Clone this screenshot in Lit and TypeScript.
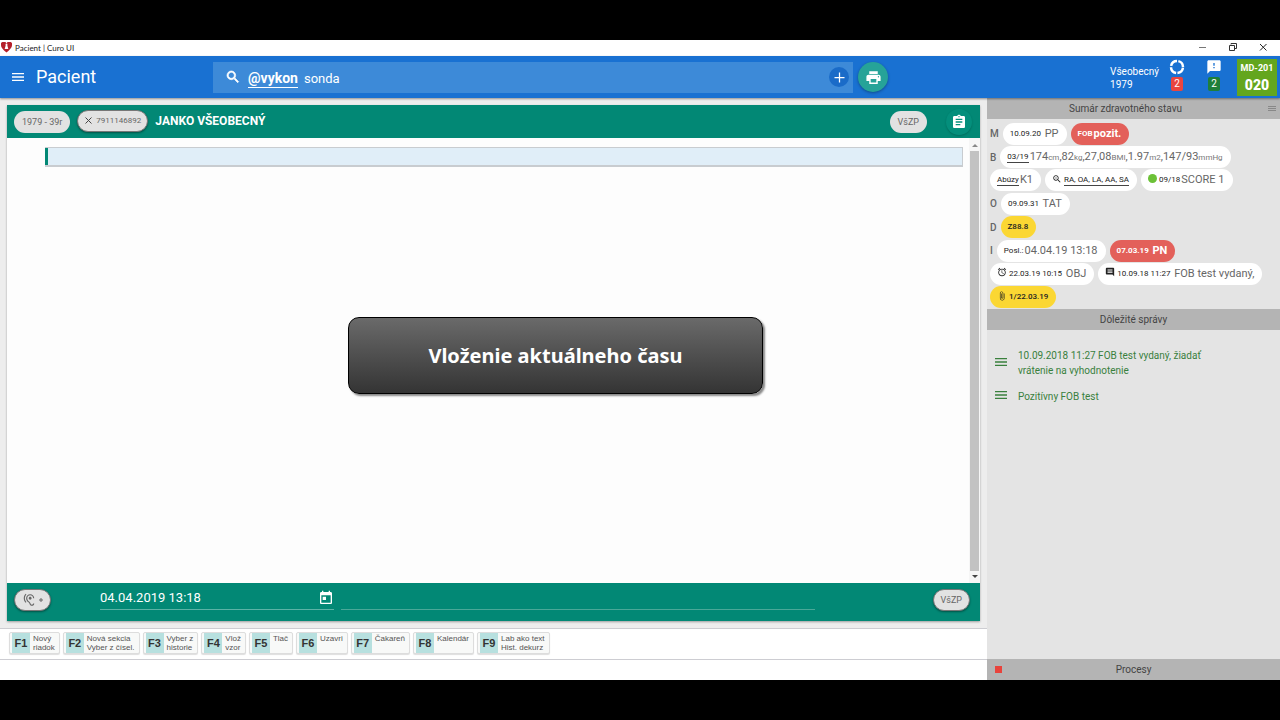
import { LitElement, html, css, svg } from "lit";
import { customElement } from "lit/decorators.js";

const ICONS: Record<string, string> = {
  menu: "M3 18h18v-2H3v2zm0-5h18v-2H3v2zm0-7v2h18V6H3z",
  search:
    "M15.5 14h-.79l-.28-.27C15.41 12.59 16 11.11 16 9.5 16 5.91 13.09 3 9.5 3S3 5.91 3 9.5 5.91 16 9.5 16c1.61 0 3.09-.59 4.23-1.57l.27.28v.79l5 4.99L20.49 19l-4.99-5zm-6 0C7.01 14 5 11.99 5 9.5S7.01 5 9.5 5 14 7.01 14 9.5 11.99 14 9.5 14z",
  zoom:
    "M15.5 14h-.79l-.28-.27C15.41 12.59 16 11.11 16 9.5 16 5.91 13.09 3 9.5 3S3 5.91 3 9.5 5.91 16 9.5 16c1.61 0 3.09-.59 4.23-1.57l.27.28v.79l5 4.99L20.49 19l-4.99-5zm-6 0C7.01 14 5 11.99 5 9.5S7.01 5 9.5 5 14 7.01 14 9.5 11.99 14 9.5 14zM7 9h5v1H7z",
  plus: "M20 13h-7v7h-2v-7H4v-2h7V4h2v7h7v2z",
  print:
    "M19 8H5c-1.66 0-3 1.34-3 3v6h4v4h12v-4h4v-6c0-1.66-1.34-3-3-3zm-3 11H8v-5h8v5zm3-7c-.55 0-1-.45-1-1s.45-1 1-1 1 .45 1 1-.45 1-1 1zm-1-9H6v4h12V3z",
  assignment:
    "M19 3h-4.18C14.4 1.84 13.3 1 12 1c-1.3 0-2.4.84-2.82 2H5c-1.1 0-2 .9-2 2v14c0 1.1.9 2 2 2h14c1.1 0 2-.9 2-2V5c0-1.1-.9-2-2-2zm-7 0c.55 0 1 .45 1 1s-.45 1-1 1-1-.45-1-1 .45-1 1-1zm2 14H7v-2h7v2zm3-4H7v-2h10v2zm0-4H7V7h10v2z",
  feedback:
    "M20 2H4c-1.1 0-1.99.9-1.99 2L2 22l4-4h14c1.1 0 2-.9 2-2V4c0-1.1-.9-2-2-2zm-7 12h-2v-2h2v2zm0-4h-2V6h2v4z",
  comment:
    "M21.99 4c0-1.1-.89-2-1.99-2H4c-1.1 0-2 .9-2 2v12c0 1.1.9 2 2 2h14l4 4-.01-18zM18 14H6v-2h12v2zm0-3H6V9h12v2zm0-3H6V6h12v2z",
  alarm:
    "M22 5.72l-4.6-3.86-1.29 1.53 4.6 3.86L22 5.72zM7.88 3.39L6.6 1.86 2 5.71l1.29 1.53 4.59-3.85zM12.5 8H11v6l4.75 2.85.75-1.23-4-2.37V8zM12 4c-4.97 0-9 4.03-9 9s4.02 9 9 9c4.97 0 9-4.03 9-9s-4.03-9-9-9zm0 16c-3.87 0-7-3.13-7-7s3.13-7 7-7 7 3.13 7 7-3.13 7-7 7z",
  attach:
    "M16.5 6v11.5c0 2.21-1.79 4-4 4s-4-1.79-4-4V5c0-1.38 1.12-2.5 2.5-2.5s2.5 1.12 2.5 2.5v10.5c0 .55-.45 1-1 1s-1-.45-1-1V6H10v9.5c0 1.38 1.12 2.5 2.5 2.5s2.5-1.12 2.5-2.5V5c0-2.21-1.79-4-4-4S7 2.79 7 5v12.5c0 3.04 2.46 5.5 5.5 5.5s5.5-2.46 5.5-5.5V6h-1.5z",
  today:
    "M19 3h-1V1h-2v2H8V1H6v2H5c-1.11 0-1.99.9-1.99 2L3 19c0 1.1.89 2 2 2h14c1.1 0 2-.9 2-2V5c0-1.1-.9-2-2-2zm0 16H5V8h14v11zM7 10h5v5H7v-5z",
  hearing:
    "M17 20c-.29 0-.56-.06-.76-.15-.71-.37-1.21-.88-1.71-2.38-.51-1.56-1.47-2.29-2.39-3-.79-.61-1.61-1.24-2.32-2.53C9.29 10.98 9 9.93 9 9c0-2.8 2.2-5 5-5s5 2.2 5 5h2c0-3.93-3.07-7-7-7S7 5.07 7 9c0 1.26.38 2.65 1.07 3.9.91 1.65 1.98 2.48 2.85 3.15.81.62 1.39 1.07 1.71 2.05.6 1.82 1.37 2.84 2.73 3.55.51.23 1.07.35 1.64.35 2.21 0 4-1.79 4-4h-2c0 1.1-.9 2-2 2zM7.64 2.64L6.22 1.22C4.23 3.21 3 5.96 3 9s1.23 5.79 3.22 7.78l1.41-1.41C6.01 13.74 5 11.49 5 9s1.01-4.74 2.64-6.36zM11.5 9c0 1.38 1.12 2.5 2.5 2.5s2.5-1.12 2.5-2.5-1.12-2.5-2.5-2.5-2.5 1.12-2.5 2.5z",
};

const icon = (name: string, size: number) => svg`
  <svg width=${size} height=${size} viewBox="0 0 24 24" fill="currentColor" aria-hidden="true">
    <path d=${ICONS[name]}></path>
  </svg>`;

const KEYS: [string, string[]][] = [
  ["F1", ["Nový", "riadok"]],
  ["F2", ["Nová sekcia", "Vyber z čísel."]],
  ["F3", ["Vyber z", "historie"]],
  ["F4", ["Vlož", "vzor"]],
  ["F5", ["Tlač"]],
  ["F6", ["Uzavri"]],
  ["F7", ["Čakareň"]],
  ["F8", ["Kalendár"]],
  ["F9", ["Lab ako text", "Hist. dekurz"]],
];

@customElement("app-root")
export class AppRoot extends LitElement {
  static styles = css`
    :host {
      display: flex;
      flex-direction: column;
      box-sizing: border-box;
      height: 100vh;
      padding: 40px 0;
      background: #000;
      position: relative;
      font-family: Roboto, sans-serif;
      color: #555;
    }
    * {
      box-sizing: border-box;
    }
    svg {
      display: block;
      flex: none;
    }
    button,
    input {
      font: inherit;
      color: inherit;
      border: 0;
      padding: 0;
      margin: 0;
      background: none;
      outline: none;
      min-width: 0;
    }
    a {
      color: inherit;
    }

    .titlebar {
      display: flex;
      align-items: center;
      height: 16px;
      flex: none;
      background: #fff;
      font: 8px/14px Lato, sans-serif;
      color: #222;
      padding: 0 0 1px 1px;
    }
    .titlebar > svg {
      margin-right: 3px;
    }
    .window-buttons {
      margin-left: auto;
      display: flex;
      gap: 20px;
      padding: 0 12px 1px 0;
    }
    .window-buttons button {
      display: block;
    }

    .topbar {
      display: flex;
      align-items: center;
      height: 42px;
      flex: none;
      background: #1971d2;
      color: #fff;
      box-shadow: 0 1px 2px #0006;
      z-index: 1;
    }
    .brand {
      display: flex;
      align-items: center;
      gap: 10px;
      width: 213px;
      padding-left: 10px;
    }
    .brand h1 {
      margin: 0;
      font-size: 18px;
      line-height: 24px;
      font-weight: 400;
    }
    .search {
      display: flex;
      align-items: center;
      width: 50%;
      height: 31px;
      background: #3d8ad8;
      padding: 0 4px 0 12px;
      font-size: 13px;
      line-height: 17px;
    }
    .search > svg {
      stroke: currentColor;
    }
    .search b {
      margin: 3px 6px 0 7px;
      border-bottom: 1px solid #fff;
      font-size: 14px;
    }
    .search input {
      flex: 1;
      margin-top: 2px;
    }
    .add {
      display: grid;
      place-items: center;
      width: 20px;
      height: 20px;
      border-radius: 50%;
      background: #1a6bc8;
    }
    .print {
      display: grid;
      place-items: center;
      width: 30px;
      height: 30px;
      margin-left: 5px;
      border-radius: 50%;
      background: #26a398;
      box-shadow: 0 1px 3px #0005;
    }
    .user {
      margin-left: auto;
      font-size: 10px;
      line-height: 13px;
      padding-top: 1px;
    }
    .counter {
      display: flex;
      flex-direction: column;
      align-items: center;
      gap: 2px;
      width: 36px;
      padding-bottom: 4px;
    }
    .counter + .counter {
      width: 38px;
    }
    .counter span {
      width: 12px;
      border-radius: 2px;
      background: #e94540;
      font-size: 10px;
      line-height: 14px;
      text-align: center;
    }
    .counter .green {
      background: #1f7f3a;
    }
    .room {
      display: flex;
      flex-direction: column;
      align-items: center;
      justify-content: center;
      width: 40px;
      height: 37px;
      margin: 0 3px 0 4px;
      background: #63a61e;
      font-weight: 700;
      font-size: 9px;
      line-height: 16px;
    }
    .room strong {
      font-size: 14px;
      line-height: 18px;
    }

    .main {
      display: flex;
      flex: 1;
      min-height: 0;
    }
    .left {
      flex: 1;
      min-width: 0;
      display: flex;
      flex-direction: column;
      background: #ededed;
    }
    .card {
      flex: 1;
      min-height: 0;
      display: flex;
      flex-direction: column;
      margin: 7px 7px;
      background: #fdfdfd;
      box-shadow: 0 1px 2px #0005;
    }
    .patient {
      display: flex;
      align-items: center;
      height: 33px;
      flex: none;
      padding: 0 8px 0 7px;
      background: #028875;
      color: #fff;
    }
    .patient h2 {
      margin: 0 auto 2px 7px;
      font-size: 12px;
      line-height: 16px;
      font-weight: 700;
    }
    .tag {
      display: flex;
      align-items: center;
      gap: 3px;
      height: 22px;
      padding: 0 8px;
      border-radius: 11px;
      background: #e2e2e2;
      color: #666;
      font-size: 9px;
      line-height: 12px;
    }
    .tag.ring {
      border: 1px solid #777;
      padding: 0 7px;
      box-shadow: 0 1px 2px #0006;
    }
    .patient .ring {
      margin: 0 0 2px 7px;
      padding: 0 6px;
      font-size: 8px;
    }
    .clip {
      display: grid;
      place-items: center;
      width: 26px;
      height: 26px;
      margin-left: 19px;
      border-radius: 50%;
      background: #048f7c;
      box-shadow: 0 1px 2px #0003;
    }
    .editor {
      flex: 1;
      min-height: 0;
      display: flex;
      padding-left: 38px;
    }
    .line {
      flex: 1;
      height: 20px;
      margin: 9px 6px 0 0;
      padding: 0 6px;
      background: #e0eef8;
      border: solid #c8ccd0;
      border-width: 1px 1px 2px 0;
      box-shadow: inset 3px 0 0 #028875;
      font-size: 12px;
    }
    .scroll {
      display: flex;
      flex-direction: column;
      align-items: center;
      width: 11px;
      padding: 6px 1px 5px;
      gap: 4px;
      background: #f6f6f6;
      color: #666;
    }
    .thumb {
      flex: 1;
      width: 9px;
      background: #c2c2c2;
    }
    .entry {
      display: flex;
      align-items: center;
      height: 38px;
      flex: none;
      padding: 0 10px 4px 7px;
      background: #028875;
      color: #fff;
    }
    .date {
      display: flex;
      align-items: flex-start;
      width: 234px;
      height: 20px;
      margin-left: 49px;
      border-bottom: 1px solid #5bb3a6;
      font-size: 13px;
      line-height: 16px;
    }
    .date input {
      flex: 1;
    }
    .note {
      flex: 1;
      height: 20px;
      margin: 0 118px 0 7px;
      border-bottom: 1px solid #4aa898;
      font-size: 13px;
    }
    .keys {
      display: flex;
      gap: 3px;
      height: 32px;
      flex: none;
      padding: 3px 9px;
      border: solid #cdcdd2;
      border-width: 1px 0;
      background: #fff;
    }
    .key {
      display: flex;
      align-items: stretch;
      height: 22px;
      padding: 0 4px 0 2px;
      gap: 3px;
      border: 1px solid #ddd;
      border-radius: 2px;
      background: #f8f9f8;
      box-shadow: 0 1px 1px #0002;
      font-family: "Liberation Sans", sans-serif;
      font-size: 8px;
      line-height: 9px;
      text-align: left;
      white-space: nowrap;
    }
    .key b {
      width: 18px;
      background: #b7e0df;
      color: #333;
      font-size: 11px;
      line-height: 20px;
      text-align: center;
    }
    .key span {
      display: block;
    }
    .key .caption {
      padding-top: 1px;
    }
    .status {
      height: 20px;
      flex: none;
      background: #fff;
    }

    .side {
      display: flex;
      flex-direction: column;
      width: 293px;
      background: #e4e4e4;
    }
    .bar {
      display: grid;
      grid-template-columns: 1fr auto 1fr;
      align-items: center;
      height: 21px;
      flex: none;
      padding: 0 8px;
      background: #b4b4b4;
      color: #444;
      font-size: 10px;
      line-height: 14px;
    }
    .bar h3 {
      grid-column: 2;
      margin: 0;
      font: inherit;
    }
    .bar.with-handle {
      display: flex;
      gap: 8px;
      padding: 0 4px;
    }
    .with-handle h3 {
      flex: 1;
      text-align: center;
    }
    .square {
      grid-row: 1;
      width: 7px;
      height: 7px;
      background: #e8433c;
    }
    .summary {
      display: grid;
      grid-auto-rows: 1fr;
      height: 190px;
      flex: none;
      padding: 3px 3px 0;
    }
    .row {
      display: flex;
      align-items: center;
      gap: 4px;
      color: #666;
      font-size: 10px;
      font-weight: 500;
    }
    .pill {
      display: flex;
      align-items: center;
      gap: 1px;
      height: 22px;
      padding: 0 8px 0 7px;
      border-radius: 11px;
      background: #fff;
      color: #666;
      font-size: 11px;
      font-weight: 400;
      line-height: 14px;
      white-space: pre;
    }
    .pill small {
      font-size: 8px;
      color: #222;
    }
    .pill .unit {
      color: #777;
    }
    .pill a {
      text-decoration: none;
      border-bottom: 1px solid #444;
      font-size: 8px;
      line-height: 10px;
      color: #222;
    }
    .pill svg,
    .dot {
      color: #222;
      margin: 0 1px 3px 0;
    }
    .pill.red,
    .pill.red small {
      background: #e3605a;
      color: #fff;
      font-weight: 700;
    }
    .pill.yellow {
      background: #fbd733;
    }
    .yellow small {
      font-weight: 500;
    }
    .dot {
      width: 9px;
      height: 9px;
      border-radius: 50%;
      background: #6cc137;
    }
    .messages {
      flex: 1;
      margin: 0;
      padding: 18px 6px;
      list-style: none;
      color: #39803d;
      font-size: 10px;
      line-height: 15px;
    }
    .messages li {
      display: flex;
      align-items: center;
      gap: 9px;
      padding: 0 60px 9px 0;
    }
    .messages svg {
      margin-bottom: 3px;
    }

    .banner {
      position: absolute;
      left: 348px;
      top: 317px;
      width: 415px;
      height: 77px;
      display: grid;
      place-items: center;
      border: 1px solid #000;
      border-radius: 11px;
      background: linear-gradient(#6a6a6a, #343434);
      box-shadow: 2px 2px 2px #0007;
      color: #fff;
      font: 700 20px/28px "Noto Sans", sans-serif;
      z-index: 2;
    }
  `;

  render() {
    return html`
      <div class="titlebar">
        <svg width="11" height="11" viewBox="0 0 24 24" aria-hidden="true">
          <path d="M12 23C4 16 0 12 0 7a6 6 0 0 1 12-3A6 6 0 0 1 24 7c0 5-4 9-12 16z" fill="#b5202b"></path>
          <path d="M10 4h4v4l2 7H8l2-7z" fill="#fff"></path>
        </svg>
        <span>Pacient | Curo UI</span>
        <div class="window-buttons">
          <button aria-label="Minimalizovať">
            <svg width="10" height="8" viewBox="0 0 10 8"><path d="M1 4.5h7" stroke="#777"></path></svg>
          </button>
          <button aria-label="Obnoviť">
            <svg width="10" height="8" viewBox="0 0 10 8" fill="none" stroke="#333">
              <path d="M1.500 2.500h5v5h-5zM3 1.500V.5h5.500v5H7"></path>
            </svg>
          </button>
          <button aria-label="Zavrieť">
            <svg width="10" height="8" viewBox="0 0 10 8"><path d="M2 1l6.500 6.500M8.500 1L2 7.500" stroke="#222"></path></svg>
          </button>
        </div>
      </div>

      <header class="topbar">
        <div class="brand">
          <button aria-label="Menu">${icon("menu", 16)}</button>
          <h1>Pacient</h1>
        </div>
        <label class="search">
          ${icon("search", 16)}
          <b>@vykon</b>
          <input type="text" aria-label="Hľadať" .value=${"sonda"} />
          <button class="add" aria-label="Pridať">${icon("plus", 15)}</button>
        </label>
        <button class="print" aria-label="Tlačiť">${icon("print", 17)}</button>
        <div class="user">Všeobecný<br />1979</div>
        <div class="counter">
          <svg width="16" height="16" viewBox="0 0 16 16" fill="none" aria-hidden="true">
            <circle cx="8" cy="8" r="6" stroke="#fff" stroke-width="2.500" stroke-dasharray="8 1.425" stroke-dashoffset="-.7"></circle>
          </svg>
          <span>2</span>
        </div>
        <div class="counter">
          ${icon("feedback", 16)}
          <span class="green">2</span>
        </div>
        <div class="room">MD-201<strong>020</strong></div>
      </header>

      <main class="main">
        <section class="left">
          <div class="card">
            <div class="patient">
              <span class="tag">1979 - 39r</span>
              <button class="tag ring">
                <svg width="9" height="9" viewBox="0 0 9 9"><path d="M1.500 1.500l6 6M7.500 1.500l-6 6" stroke="#444"></path></svg>
                7911146892
              </button>
              <h2>JANKO VŠEOBECNÝ</h2>
              <span class="tag">VšZP</span>
              <button class="clip" aria-label="Záznam">${icon("assignment", 16)}</button>
            </div>
            <div class="editor">
              <input class="line" type="text" aria-label="Riadok záznamu" />
              <div class="scroll">
                <svg width="6" height="3" viewBox="0 0 6 3"><path d="M0 3l3-3 3 3z" fill="#888"></path></svg>
                <div class="thumb"></div>
                <svg width="6" height="3" viewBox="0 0 6 3"><path d="M0 0l3 3 3-3z" fill="#444"></path></svg>
              </div>
            </div>
            <div class="entry">
              <button class="tag ring" aria-label="Počúvať">
                ${icon("hearing", 14)}
                <svg width="4" height="4" viewBox="0 0 4 4"><path d="M0 2h4M2 0v4" stroke="#666"></path></svg>
              </button>
              <label class="date">
                <input type="text" aria-label="Dátum a čas" .value=${"04.04.2019 13:18"} />
                ${icon("today", 16)}
              </label>
              <input class="note" type="text" aria-label="Poznámka" />
              <button class="tag ring">VšZP</button>
            </div>
          </div>
          <nav class="keys">
            ${KEYS.map(
              ([key, lines]) => html`<button class="key">
                <b>${key}</b>
                <span class="caption">${lines.map((line) => html`<span>${line}</span>`)}</span>
              </button>`
            )}
          </nav>
          <div class="status"></div>
        </section>

        <aside class="side">
          <div class="bar with-handle">
            <h3>Sumár zdravotného stavu</h3>
            <svg width="8" height="5" viewBox="0 0 8 5"><path d="M0 .5h8M0 2.500h8M0 4.500h8" stroke="#888"></path></svg>
          </div>
          <div class="summary">
            <div class="row">M<span class="pill"><small>10.09.20</small> PP</span><span class="pill red"><small>FOB</small>pozit.</span></div>
            <div class="row">B<span class="pill"><a href="#">03/19</a><span>174<small class="unit">cm</small>,82<small class="unit">kg</small>,27,08<small class="unit">BMI</small>,1.97<small class="unit">m2</small>,147/93<small class="unit">mmHg</small></span></span></div>
            <div class="row">
              <span class="pill"><a href="#">Abúzy</a>K1</span>
              <span class="pill">${icon("zoom", 10)}<a href="#">RA, OA, LA, AA, SA</a></span>
              <span class="pill"><i class="dot"></i><small>09/18</small>SCORE 1</span>
            </div>
            <div class="row">O<span class="pill"><small>09.09.31</small> TAT</span></div>
            <div class="row">D<span class="pill yellow"><small>Z88.8</small></span></div>
            <div class="row">I<span class="pill"><small>Posl.:</small>04.04.19 13:18</span><span class="pill red"><small>07.03.19</small> PN</span></div>
            <div class="row">
              <span class="pill">${icon("alarm", 10)}<small>22.03.19 10:15</small> OBJ</span>
              <span class="pill">${icon("comment", 10)}<small>10.09.18 11:27</small> FOB test vydaný,</span>
            </div>
            <div class="row"><span class="pill yellow">${icon("attach", 10)}<small>1/22.03.19</small></span></div>
          </div>
          <div class="bar"><h3>Dôležité správy</h3></div>
          <ul class="messages">
            <li>${icon("menu", 16)}<span>10.09.2018 11:27 FOB test vydaný, žiadať vrátenie na vyhodnotenie</span></li>
            <li>${icon("menu", 16)}<span>Pozitívny FOB test</span></li>
          </ul>
          <div class="bar"><i class="square"></i><h3>Procesy</h3></div>
        </aside>
      </main>

      <div class="banner" role="status">Vloženie aktuálneho času</div>
    `;
  }
}
